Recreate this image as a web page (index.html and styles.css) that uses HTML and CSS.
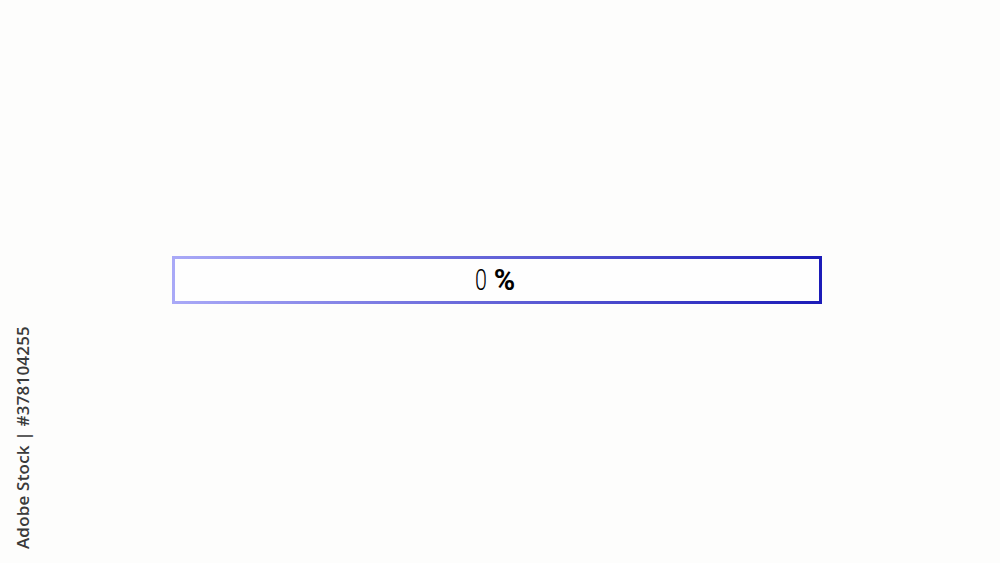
FILE: index.html
```html
<!DOCTYPE html>
<html>
<head>
    <title>Loading</title>
    <link rel="stylesheet" href="styles.css">
</head>
<body>
    <div class="page">
        <div class="bar">
            <span class="num">0</span><span class="pct">%</span>
        </div>
    </div>
    <div class="credit">Adobe Stock | #378104255</div>
</body>
</html>
```
FILE: styles.css
```css
body {
    margin: 0;
    padding: 0;
    background: #fdfdfc;
    font-family: Roboto, "Liberation Sans", sans-serif;
}

.page {
    height: 563px;
    display: flex;
    align-items: center;
    justify-content: center;
}

.bar {
    width: 638px;
    height: 42px;
    padding-right: 6px;
    margin: 0 6px 3px 0;
    border: 3px solid;
    border-image: linear-gradient(to right, #a9a9f7, #1c1cb8) 1;
    display: flex;
    align-items: center;
    justify-content: center;
    background: #fefefe;
}

.num {
    font-size: 29px;
    font-weight: 300;
    color: #000;
    display: inline-block;
    transform: scaleX(0.74);
}

.pct {
    font-size: 29px;
    font-weight: 700;
    color: #000;
    margin-left: 5px;
}

.credit {
    position: absolute;
    left: 11px;
    top: 326px;
    writing-mode: vertical-rl;
    transform: rotate(180deg);
    font-family: "Open Sans", "Liberation Sans", sans-serif;
    font-size: 17px;
    font-weight: 600;
    color: #3a3a3a;
    letter-spacing: 0.2px;
}
```
